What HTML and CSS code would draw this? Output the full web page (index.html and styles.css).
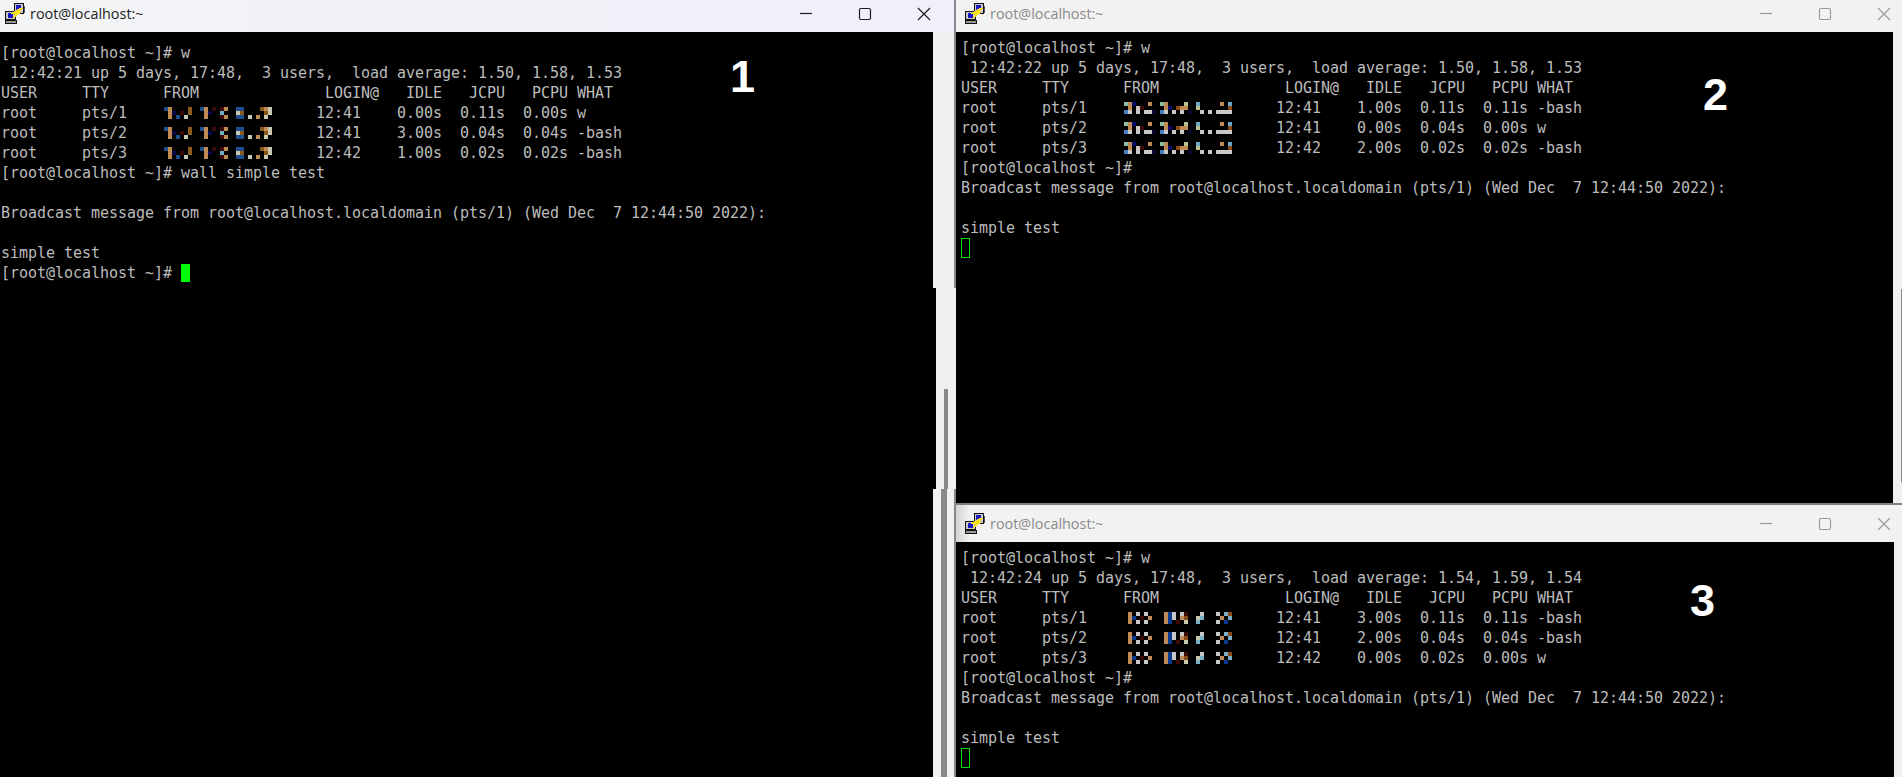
FILE: index.html
```html
<!DOCTYPE html>
<html lang="en">
<head>
<meta charset="utf-8">
<title>PuTTY sessions</title>
<link rel="stylesheet" href="styles.css">
</head>
<body>
<svg class="defs" width="0" height="0" aria-hidden="true">
  <defs>
    <g id="putty" shape-rendering="crispEdges">
      <rect x="9" y="0" width="10" height="11" fill="#111"/>
      <rect x="10" y="1" width="8" height="9" fill="#c8c8c8"/>
      <rect x="11" y="2" width="5" height="6" fill="#1a1ac0"/>
      <rect x="19" y="3" width="1" height="7" fill="#555"/>
      <rect x="0" y="8" width="11" height="9" fill="#111"/>
      <rect x="1" y="9" width="9" height="7" fill="#c8c8c8"/>
      <rect x="3" y="10" width="5" height="5" fill="#1a1ac0"/>
      <rect x="0" y="17" width="12" height="4" fill="#111"/>
      <rect x="1" y="18" width="10" height="2" fill="#999"/>
      <polygon points="15,5 18,5 14,9 17,9 7,16 10,11 5,11 8,9" fill="#f7e21b"/>
    </g>
    <g id="ip1" shape-rendering="crispEdges">
      <path fill="#1f4e8c" d="M0 0h4v4H0zM36 0h4v4h-4zM12 8h4v4h-4zM72 0h8v4h-8zM72 8h8v4h-8z"/>
      <path fill="#c08a55" d="M4 0h4v12H4zM40 0h4v12h-4zM60 0h4v4h-4zM60 8h4v4h-4zM92 8h4v4h-4zM100 0h4v4h-4z"/>
      <path fill="#8a5a1a" d="M24 0h4v8h-4zM76 4h4v4h-4zM96 0h4v4h-4zM100 4h4v4h-4z"/>
      <path fill="#3d0808" d="M16 4h4v4h-4zM48 0h4v4h-4zM56 0h4v4h-4zM56 8h4v4h-4z"/>
      <path fill="#08084a" d="M8 4h4v4H8zM44 4h4v4h-4z"/>
      <path fill="#6fb0c8" d="M56 4h4v4h-4z"/>
      <path fill="#c8c8b4" d="M20 8h4v4h-4zM72 4h4v4h-4zM104 0h4v8h-4zM84 8h4v4h-4zM100 8h4v4h-4z"/>
    </g>
    <g id="ip2" shape-rendering="crispEdges">
      <path fill="#8cc0a0" d="M0 0h4v4H0zM36 0h4v4h-4z"/>
      <path fill="#c08a55" d="M4 0h4v8H4zM40 0h4v8h-4zM24 0h4v4h-4zM96 0h4v4h-4zM56 4h8v4h-8z"/>
      <path fill="#0a0a70" d="M8 0h4v4H8zM44 4h4v4h-4z"/>
      <path fill="#8b4a18" d="M52 4h4v4h-4zM104 4h4v4h-4z"/>
      <path fill="#b8c090" d="M60 0h4v4h-4zM72 4h4v4h-4z"/>
      <path fill="#6aa8c8" d="M72 0h4v4h-4zM104 0h4v4h-4z"/>
      <path fill="#3d0808" d="M16 4h4v4h-4z"/>
      <path fill="#c8c8c8" d="M12 4h4v4h-4zM12 8h4v4h-4zM4 8h4v4H4zM20 8h8v4h-8zM40 8h4v4h-4zM48 8h4v4h-4zM56 8h4v4h-4zM76 8h4v4h-4zM84 8h4v4h-4zM92 8h16v4H92z"/>
      <path fill="#4a80c8" d="M0 8h4v4H0zM36 8h4v4h-4z"/>
      <path fill="#060630" d="M28 8h4v4h-4zM64 8h4v4h-4z"/>
    </g>
    <g id="ip3" shape-rendering="crispEdges">
      <path fill="#c08a55" d="M4 0h4v12H4zM40 0h4v12h-4zM24 4h4v4h-4zM56 4h4v4h-4zM96 4h4v4h-4z"/>
      <path fill="#c8c8c8" d="M12 0h4v4h-4zM20 0h4v4h-4zM12 8h4v4h-4zM20 8h4v4h-4zM48 0h4v4h-4zM56 0h4v4h-4zM76 0h4v4h-4zM92 0h4v4h-4zM92 8h4v4h-4zM48 4h4v4h-4z"/>
      <path fill="#0a3a90" d="M8 4h4v4H8zM44 0h4v12h-4zM100 8h4v4h-4z"/>
      <path fill="#3d0808" d="M16 4h4v4h-4zM60 0h4v4h-4zM52 8h4v4h-4z"/>
      <path fill="#8b4a18" d="M60 4h4v4h-4zM104 0h4v4h-4z"/>
      <path fill="#c8c8a8" d="M60 8h4v4h-4zM72 4h4v4h-4z"/>
      <path fill="#7ab0c8" d="M72 8h4v4h-4zM76 4h4v4h-4zM104 4h4v4h-4zM100 0h4v4h-4z"/>
    </g>
  </defs>
</svg>

<main class="desktop">
  <div class="strip-under"></div>
  <div class="sash sash-a"></div>
  <div class="sash sash-b"></div>
  <div class="sash sash-c"></div>
  <div class="sash sash-d"></div>
  <div class="sash sash-e"></div>

  <section class="window win-1">
    <header class="titlebar active">
      <svg class="app-icon" viewBox="0 0 20 21"><use href="#putty"/></svg>
      <span class="title">root@localhost:~</span>
      <div class="controls">
        <svg class="ctl" viewBox="0 0 14 14"><path d="M1 6.5h12"/></svg>
        <svg class="ctl" viewBox="0 0 14 14"><rect x="1.5" y="1.5" width="11" height="11" rx="1.5"/></svg>
        <svg class="ctl" viewBox="0 0 14 14"><path d="M1 1l12 12M13 1L1 13"/></svg>
      </div>
    </header>
    <div class="term term-1">
      <div class="line">[root@localhost ~]# w</div>
      <div class="line"> 12:42:21 up 5 days, 17:48,  3 users,  load average: 1.50, 1.58, 1.53</div>
      <div class="line">USER     TTY      FROM              LOGIN@   IDLE   JCPU   PCPU WHAT</div>
      <div class="line">root     pts/1    <span class="ip"><svg viewBox="0 0 108 12"><use href="#ip1"/></svg></span>     12:41    0.00s  0.11s  0.00s w</div>
      <div class="line">root     pts/2    <span class="ip"><svg viewBox="0 0 108 12"><use href="#ip1"/></svg></span>     12:41    3.00s  0.04s  0.04s -bash</div>
      <div class="line">root     pts/3    <span class="ip"><svg viewBox="0 0 108 12"><use href="#ip1"/></svg></span>     12:42    1.00s  0.02s  0.02s -bash</div>
      <div class="line">[root@localhost ~]# wall simple test</div>
      <div class="line"></div>
      <div class="line">Broadcast message from root@localhost.localdomain (pts/1) (Wed Dec  7 12:44:50 2022):</div>
      <div class="line"></div>
      <div class="line">simple test</div>
      <div class="line">[root@localhost ~]# <span class="cursor solid"></span></div>
    </div>
  </section>

  <section class="window win-2">
    <header class="titlebar inactive">
      <svg class="app-icon" viewBox="0 0 20 21"><use href="#putty"/></svg>
      <span class="title">root@localhost:~</span>
      <div class="controls">
        <svg class="ctl" viewBox="0 0 14 14"><path d="M1 6.5h12"/></svg>
        <svg class="ctl" viewBox="0 0 14 14"><rect x="1.5" y="1.5" width="11" height="11" rx="1.5"/></svg>
        <svg class="ctl" viewBox="0 0 14 14"><path d="M1 1l12 12M13 1L1 13"/></svg>
      </div>
    </header>
    <div class="term term-2">
      <div class="line">[root@localhost ~]# w</div>
      <div class="line"> 12:42:22 up 5 days, 17:48,  3 users,  load average: 1.50, 1.58, 1.53</div>
      <div class="line">USER     TTY      FROM              LOGIN@   IDLE   JCPU   PCPU WHAT</div>
      <div class="line">root     pts/1    <span class="ip"><svg viewBox="0 0 108 12"><use href="#ip2"/></svg></span>     12:41    1.00s  0.11s  0.11s -bash</div>
      <div class="line">root     pts/2    <span class="ip"><svg viewBox="0 0 108 12"><use href="#ip2"/></svg></span>     12:41    0.00s  0.04s  0.00s w</div>
      <div class="line">root     pts/3    <span class="ip"><svg viewBox="0 0 108 12"><use href="#ip2"/></svg></span>     12:42    2.00s  0.02s  0.02s -bash</div>
      <div class="line">[root@localhost ~]#</div>
      <div class="line">Broadcast message from root@localhost.localdomain (pts/1) (Wed Dec  7 12:44:50 2022):</div>
      <div class="line"></div>
      <div class="line">simple test</div>
      <div class="line"><span class="cursor hollow"></span></div>
    </div>
  </section>

  <section class="window win-3">
    <header class="titlebar inactive fade">
      <svg class="app-icon" viewBox="0 0 20 21"><use href="#putty"/></svg>
      <span class="title">root@localhost:~</span>
      <div class="controls">
        <svg class="ctl" viewBox="0 0 14 14"><path d="M1 6.5h12"/></svg>
        <svg class="ctl" viewBox="0 0 14 14"><rect x="1.5" y="1.5" width="11" height="11" rx="1.5"/></svg>
        <svg class="ctl" viewBox="0 0 14 14"><path d="M1 1l12 12M13 1L1 13"/></svg>
      </div>
    </header>
    <div class="term term-3">
      <div class="line">[root@localhost ~]# w</div>
      <div class="line"> 12:42:24 up 5 days, 17:48,  3 users,  load average: 1.54, 1.59, 1.54</div>
      <div class="line">USER     TTY      FROM              LOGIN@   IDLE   JCPU   PCPU WHAT</div>
      <div class="line">root     pts/1    <span class="ip"><svg viewBox="0 0 108 12"><use href="#ip3"/></svg></span>     12:41    3.00s  0.11s  0.11s -bash</div>
      <div class="line">root     pts/2    <span class="ip"><svg viewBox="0 0 108 12"><use href="#ip3"/></svg></span>     12:41    2.00s  0.04s  0.04s -bash</div>
      <div class="line">root     pts/3    <span class="ip"><svg viewBox="0 0 108 12"><use href="#ip3"/></svg></span>     12:42    0.00s  0.02s  0.00s w</div>
      <div class="line">[root@localhost ~]#</div>
      <div class="line">Broadcast message from root@localhost.localdomain (pts/1) (Wed Dec  7 12:44:50 2022):</div>
      <div class="line"></div>
      <div class="line">simple test</div>
      <div class="line"><span class="cursor hollow"></span></div>
    </div>
  </section>

  <span class="label label-1">1</span>
  <span class="label label-2">2</span>
  <span class="label label-3">3</span>
</main>
</body>
</html>
```
FILE: styles.css
```css
html, body {
  margin: 0;
  height: 100%;
  overflow: hidden;
  background: #f0f0f0;
}

.defs {
  position: absolute;
}

.desktop {
  position: relative;
  width: 1902px;
  height: 777px;
  overflow: hidden;
}

.window {
  position: absolute;
  display: flex;
  flex-direction: column;
  box-sizing: border-box;
}

.win-1 {
  left: 0;
  top: 0;
  width: 954px;
  height: 777px;
}

.win-2 {
  left: 956px;
  top: 0;
  width: 946px;
  height: 503px;
}

.win-3 {
  left: 956px;
  top: 503px;
  width: 946px;
  height: 274px;
  border-top: 2px solid #808080;
}

.titlebar {
  flex: none;
  display: flex;
  align-items: center;
  box-sizing: border-box;
  height: 32px;
  padding-bottom: 5px;
  font-family: "Open Sans", "Noto Sans", sans-serif;
  font-size: 14.4px;
}

.titlebar.active {
  padding-left: 5px;
  color: #1c1c1c;
  background: linear-gradient(90deg, #f3f4f5, #eff0fa);
}

.titlebar.inactive {
  padding-left: 9px;
  color: #8a8a8a;
  background: #f2f2f2;
}

.win-3 .titlebar {
  height: 37px;
  padding-bottom: 0;
}

.titlebar.fade {
  background: linear-gradient(90deg, #d4d4d4, #f2f2f2 14px);
}

.app-icon {
  flex: none;
  width: 20px;
  height: 21px;
  margin-right: 5px;
}

.title {
  line-height: 20px;
}

.controls {
  display: flex;
  align-items: center;
  gap: 45px;
  margin-left: auto;
}

.active .controls {
  padding-right: 23px;
}

.inactive .controls {
  padding-right: 11px;
}

.ctl {
  width: 14px;
  height: 14px;
  fill: none;
  stroke: #1c1c1c;
  stroke-width: 1.2;
}

.inactive .ctl {
  stroke: #9a9a9a;
}

.term {
  flex: 1;
  background: #000;
  color: #bcbcbc;
  font-family: "DejaVu Sans Mono", "Liberation Mono", monospace;
  font-size: 15px;
  letter-spacing: -0.03px;
  line-height: 20px;
  overflow: hidden;
}

.line {
  height: 20px;
  white-space: pre;
}

.term-1 {
  margin-right: 21px;
  padding: 11px 0 0 1px;
}

.term-2 {
  margin-right: 9px;
  padding: 6px 0 0 5px;
}

.term-3 {
  margin-right: 8px;
  padding: 6px 0 0 5px;
}

.ip {
  display: inline-block;
  width: 108px;
  height: 12px;
  margin: 0 -1px 0 1px;
  vertical-align: -1px;
}

.ip svg {
  display: block;
  width: 108px;
  height: 12px;
}

.cursor {
  display: inline-block;
  width: 9px;
  height: 18px;
  vertical-align: -4px;
  box-sizing: border-box;
}

.cursor.solid {
  background: #00ff00;
}

.cursor.hollow {
  height: 20px;
  vertical-align: -3px;
  border: 1px solid #00e000;
}

.strip-under {
  position: absolute;
  left: 933px;
  top: 288px;
  width: 3px;
  height: 201px;
  background: #000;
}

.sash {
  position: absolute;
  background: #888;
}

.sash-a {
  left: 954px;
  top: 0;
  width: 2px;
  height: 288px;
}

.sash-b {
  left: 944px;
  top: 389px;
  width: 4px;
  height: 100px;
}

.sash-c {
  left: 941px;
  top: 489px;
  width: 6px;
  height: 288px;
}

.sash-d {
  left: 954px;
  top: 489px;
  width: 2px;
  height: 288px;
}

.sash-e {
  left: 1901px;
  top: 289px;
  width: 1px;
  height: 193px;
  z-index: 1;
}

.label {
  position: absolute;
  color: #fff;
  font-family: "Liberation Sans", Arial, sans-serif;
  font-weight: 700;
  font-size: 45px;
  line-height: 52px;
}

.label-1 {
  left: 730px;
  top: 51px;
}

.label-2 {
  left: 1703px;
  top: 69px;
}

.label-3 {
  left: 1690px;
  top: 575px;
}
```
